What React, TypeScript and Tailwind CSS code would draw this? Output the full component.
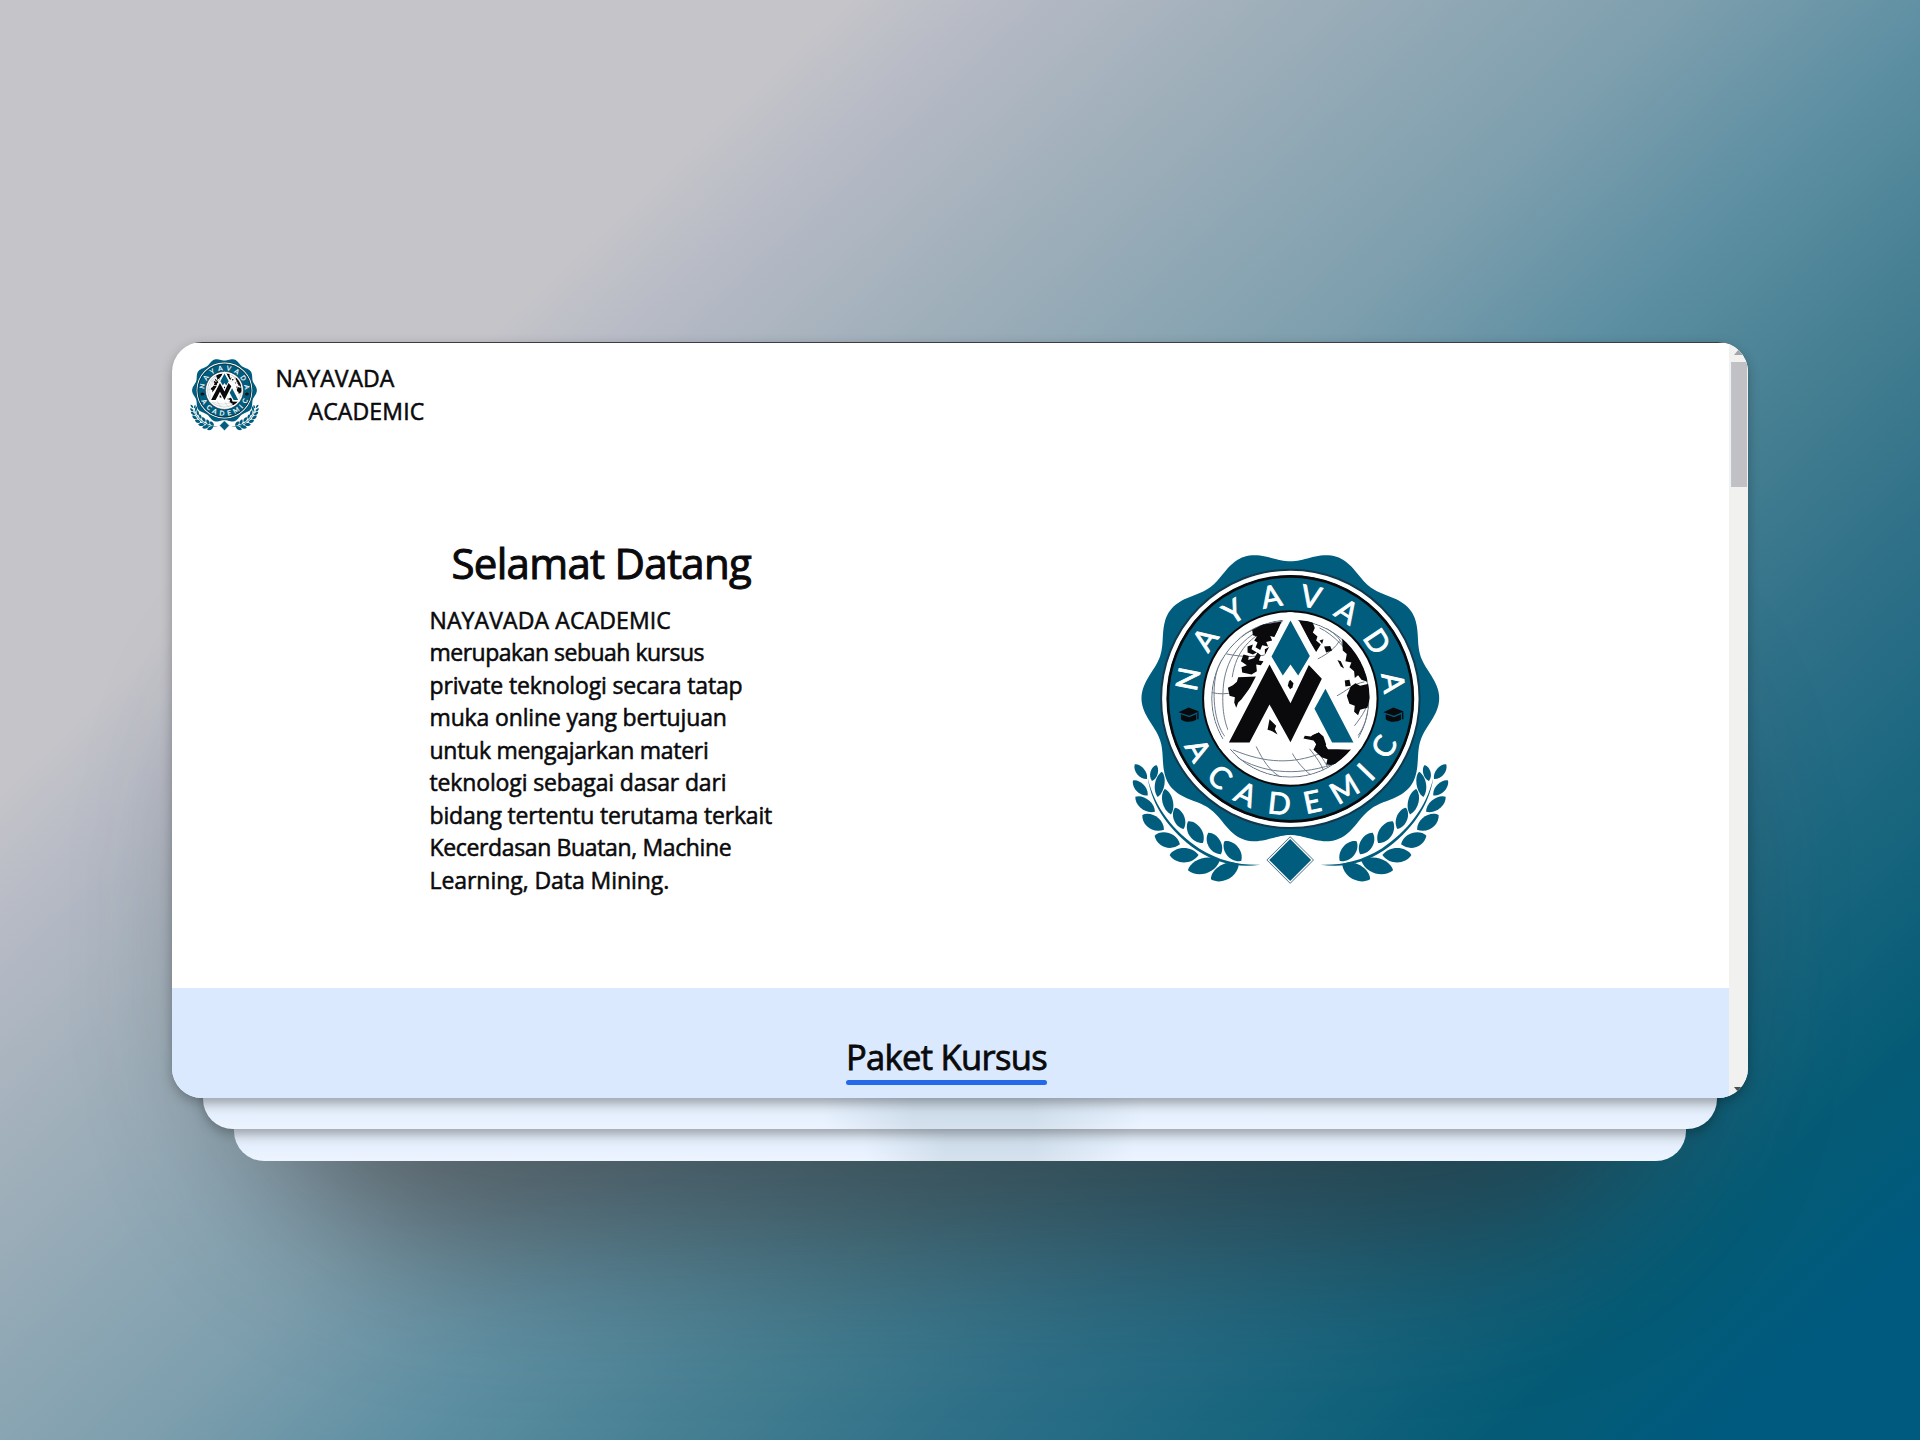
const TEAL = "#005d7e";
const INK = "#0a090b";

type Leaf = [number, number, number, number, number];

/* tip x, tip y, base x, base y, width */
const leaves: Leaf[] = [
  [45, 672, 82, 716, 25],
  [40, 720, 84, 765, 28],
  [47, 769, 106, 814, 33],
  [68, 824, 133, 868, 40],
  [105, 886, 181, 912, 43],
  [150, 944, 237, 944, 43],
  [205, 990, 300, 962, 46],
  [274, 1017, 358, 972, 46],
  [110, 674, 97, 722, 22],
  [127, 694, 114, 770, 28],
  [135, 746, 154, 822, 31],
  [166, 802, 192, 866, 32],
  [205, 843, 250, 908, 39],
  [266, 877, 304, 942, 38],
  [314, 903, 365, 962, 40],
];

function leafPath([tx, ty, bx, by, w]: Leaf) {
  const dx = bx - tx;
  const dy = by - ty;
  const len = Math.hypot(dx, dy);
  const nx = (-dy / len) * w * 0.66;
  const ny = (dx / len) * w * 0.66;
  const p = (t: number, s: number) =>
    `${(tx + dx * t + nx * s).toFixed(1)} ${(ty + dy * t + ny * s).toFixed(1)}`;
  return `M${tx} ${ty}C${p(0.2, 1)} ${p(0.75, 1.1)} ${bx} ${by}C${p(0.75, -1.1)} ${p(0.15, -0.9)} ${tx} ${ty}Z`;
}

function scallopPath() {
  const pts: string[] = [];
  for (let i = 0; i < 360; i += 1) {
    const a = (i * Math.PI) / 180;
    const r = 429 + 18 * Math.cos(10 * a);
    pts.push(`${(512.5 + r * Math.cos(a)).toFixed(1)} ${(473 + r * Math.sin(a)).toFixed(1)}`);
  }
  return `M${pts.join("L")}Z`;
}

const scallop = scallopPath();

/* letter, degrees clockwise from the top of the ring */
const upper: [string, number][] = [
  ["N", -79],
  ["A", -55],
  ["Y", -33],
  ["A", -10.5],
  ["V", 11.5],
  ["A", 33],
  ["D", 56.5],
  ["A", 81],
];

/* letter, degrees clockwise from the bottom of the ring */
const lower: [string, number][] = [
  ["A", 61],
  ["C", 42],
  ["A", 25],
  ["D", 6],
  ["E", -12],
  ["M", -31],
  ["I", -46],
  ["C", -63],
];

const shapes = {
  diamond: "M513 240L571 346L536 405L513 372L490 405L456 348Z",
  zigzag: "M328 606L450 372L513 488L568 373L607 415L513 605L450 492L390 606Z",
  leg: "M618 445L702 606H638L585 505Z",
};

function Laurel() {
  return (
    <g fill={TEAL}>
      {leaves.map((l) => (
        <path key={`${l[0]}-${l[1]}`} d={leafPath(l)} />
      ))}
      <path d="M84 712C105 800 160 872 240 925C300 962 360 975 423 973C360 983 295 972 232 930C150 872 98 800 84 712Z" />
    </g>
  );
}

function Cap({ x }: { x: number }) {
  return (
    <g transform={`translate(${x} 522)`} fill={INK}>
      <path d="M-30 -7L0 -21L31 -9L2 4Z" />
      <path d="M-23 -1L2 8L23 -1V16C10 24 -12 24 -23 14Z" />
      <path d="M26 -7H30V14H26Z" />
    </g>
  );
}

function Seal({ className, id }: { className: string; id: string }) {
  const ring = (list: [string, number][], y: number) =>
    list.map(([ch, deg]) => (
      <text
        key={deg}
        transform={`translate(512.5 475) rotate(${deg})`}
        y={y}
        textAnchor="middle"
        fontFamily="Lato, sans-serif"
        fontSize={90}
        fill="#fff"
        stroke="#fff"
        strokeWidth={2.6}
      >
        {ch}
      </text>
    ));
  return (
    <svg viewBox="38 40 950 994" className={className} aria-label="Nayavada Academic">
      <defs>
        <clipPath id={id}>
          <circle cx="512.5" cy="474" r="238" />
        </clipPath>
        <clipPath id={`${id}-disc`}>
          <circle cx="512.5" cy="474" r="259" />
        </clipPath>
      </defs>
      <path d={scallop} fill={TEAL} />
      <circle cx="512.5" cy="475" r="388" fill="none" stroke="#16364a" strokeWidth="6" />
      <circle cx="512.5" cy="475" r="378" fill="none" stroke="#fff" strokeWidth="14" />
      <circle cx="512.5" cy="475" r="368" fill="none" stroke={INK} strokeWidth="8" />
      <circle cx="512.5" cy="474" r="262" fill="#fff" stroke={INK} strokeWidth="6" />

      <g clipPath={`url(#${id})`}>
        <circle cx="512.5" cy="474" r="236" fill="none" stroke="#5b6b7c" strokeWidth="3" />
        <g fill="none" stroke="#6f7c8b" strokeWidth="3">
          <path d="M500 242C340 250 290 350 284 440C280 520 300 570 318 590" />
          <path d="M490 246C370 270 322 350 312 430C304 510 318 550 326 570" />
          <path d="M470 250C390 290 350 330 338 410" />
          <path d="M440 255C340 280 300 340 285 400" />
          <path d="M320 340C380 352 420 350 470 335" />
          <path d="M276 456C300 462 320 460 345 456" />
          <path d="M340 628C440 670 520 670 600 640" />
          <path d="M350 650C430 695 520 710 640 672" />
          <path d="M410 618C430 660 450 690 480 708" />
          <path d="M505 610C520 650 545 680 575 705" />
          <path d="M570 625C590 650 605 670 612 690" />
          <path d="M590 620C605 650 618 665 625 682" />
          <path d="M595 355C625 340 650 320 660 300" />
          <path d="M600 262C640 280 690 330 712 380" />
          <path d="M620 262C655 285 665 300 672 320" />
          <path d="M652 466C680 452 700 430 735 424" />
          <path d="M705 556C725 530 735 515 745 490" />
          <path d="M716 585C735 560 742 530 745 510" />
        </g>
        <g fill={INK}>
          <path d="M398 268L430 252L486 243L474 272L466 290L452 286L458 300L440 304L446 318L428 314L422 328L408 320L414 306L404 300L412 288L400 284Z" />
          <path d="M384 318L400 312L396 326L412 336L400 342L384 336Z" />
          <path d="M372 342L388 346L386 358L404 352L414 336L424 344L418 360L432 362L424 374L410 372L412 392L396 402L368 396L366 380L382 374L364 362Z" />
          <path d="M436 326L452 318L448 338L436 344Z" />
          <path d="M472 292L484 286L476 304L466 302Z" />
          <path d="M325 442L340 434L352 424L356 410L412 408L404 426L390 444L366 476L356 486L350 502L344 486L346 470L330 466Z" />
          <path d="M538 240L578 241L586 262L580 276L594 288L590 300L604 312L590 334L572 304Z" />
          <path d="M614 318L632 316L638 330L620 336Z" />
          <path d="M600 300L612 296L608 310Z" />
          <path d="M668 292L690 298L716 330L738 362L748 400L744 424L726 418L716 404L706 412L704 392L690 380L696 366L678 362L682 340L670 330Z" />
          <path d="M654 358L664 362L674 384L664 378Z" />
          <path d="M676 420L690 418L694 436L678 438Z" />
          <path d="M694 438L708 428L722 436L748 430L752 470L744 502L722 508L716 524L704 514L706 496L690 490L682 466Z" />
          <path d="M579 584L598 576L614 590L612 602L624 624L700 628L680 652L650 670L634 674L620 672L624 656L606 650L582 628L590 612Z" />
        </g>
      </g>

      <g clipPath={`url(#${id}-disc)`} fill="#fff" stroke="#fff" strokeWidth="40" strokeMiterlimit="3">
        <path d={shapes.diamond} />
        <path d={shapes.zigzag} />
        <path d={shapes.leg} />
      </g>
      <path d="M513 400L556 440L513 500L470 440Z" fill="#fff" />
      <path d="M450 536L470 556L466 566L474 582L458 572L444 568Z" fill={INK} />
      <path d="M512 418L522 428L519 440L512 446L505 436L508 424Z" fill={INK} />
      <path d="M579 584L598 576L612 588L620 612L612 625L588 625L590 610L582 600L552 594L556 586L574 588Z" fill={INK} />
      <path d={shapes.diamond} fill={TEAL} />
      <path d={shapes.zigzag} fill={INK} />
      <path d={shapes.leg} fill={TEAL} />

      {ring(upper, -281)}
      {ring(lower, 348)}
      <Cap x={207} />
      <Cap x={822} />

      <path d="M512 886L585 959L512 1032L439 959Z" fill="#fff" stroke="#fff" strokeWidth="4" />
      <path d="M512 889L582 959L512 1029L442 959Z" fill="#fff" stroke="#4b7186" strokeWidth="3" />
      <path d="M512 896L575 959L512 1022L449 959Z" fill={TEAL} />
      <Laurel />
      <g transform="matrix(-1 0 0 1 1026 0)">
        <Laurel />
      </g>
    </svg>
  );
}

function ScrollBar() {
  return (
    <div className="flex w-[19px] shrink-0 flex-col items-center justify-between bg-[#f1f1f0]">
      <div className="flex w-full flex-col items-center">
        <div className="flex h-[20px] items-end pb-[7px]">
          <svg viewBox="0 0 10 6" className="h-[6px] w-[10px]">
            <path d="M5 0L10 6H0Z" fill="#a3a5a8" />
          </svg>
        </div>
        <div className="h-[125px] w-4 border-l border-[#b9c6d3] bg-[#c1c1c5]" />
      </div>
      <svg viewBox="0 0 10 6" className="mb-[5px] h-[6px] w-[10px]">
        <path d="M0 0H10L5 6Z" fill="#4a4c50" />
      </svg>
    </div>
  );
}

export default function App() {
  return (
    <div className="relative isolate flex h-[1440px] w-[1920px] flex-col items-center overflow-hidden bg-[linear-gradient(137deg,#c5c5c9_0%,#c4c4c9_24.5%,#b6bac5_29%,#a1b0bb_36%,#7e9fae_48.5%,#5f90a3_56%,#467f92_64%,#2e7088_72%,#1a667f_79.5%,#055b75_87.5%,#005a7f_94%,#005a80_100%)] pt-[342px] font-['Open_Sans','Noto_Sans',sans-serif] text-[#0a0a0c] [-webkit-text-stroke:0.55px]">
      <div className="absolute left-[240px] top-[620px] -z-10 h-[630px] w-[1440px] rounded-[240px] bg-[rgba(42,30,28,0.5)] blur-[75px]" />
      <main className="relative z-30 flex h-[756px] w-[1576px] shrink-0 overflow-hidden rounded-[30px] bg-white shadow-[0_4px_12px_rgba(0,0,0,0.28)]">
        <div className="flex min-w-0 flex-1 flex-col">
          <div className="h-px shrink-0 bg-[#3c3c45]" />
          <header className="flex h-[104px] shrink-0 items-start pl-[18px] pt-4">
            <Seal id="globe-small" className="h-[72px] w-[69px]" />
            <div className="ml-[16.5px] mt-[3px] flex flex-col whitespace-nowrap text-[23px] leading-[32.5px]">
              <span>NAYAVADA</span>
              <span className="ml-[33px] tracking-[0.15px]">ACADEMIC</span>
            </div>
          </header>
          <section className="flex flex-1 items-start">
            <div className="flex w-[778px] flex-col pl-[257.5px] pt-[91px]">
              <h1 className="ml-[22px] h-[58px] whitespace-nowrap text-[42px] leading-[50px] tracking-[-0.7px] [-webkit-text-stroke:1px]">
                Selamat Datang
              </h1>
              <p className="mt-[7.5px] flex flex-col whitespace-nowrap text-[23px] leading-[32.5px]">
                <span className="tracking-[0.12px]">NAYAVADA ACADEMIC</span>
                <span className="tracking-[-0.5px]">merupakan sebuah kursus</span>
                <span className="tracking-[-0.15px]">private teknologi secara tatap</span>
                <span className="tracking-[-0.15px]">muka online yang bertujuan</span>
                <span className="tracking-[-0.27px]">untuk mengajarkan materi</span>
                <span className="tracking-[-0.14px]">teknologi sebagai dasar dari</span>
                <span className="tracking-[-0.18px]">bidang tertentu terutama terkait</span>
                <span className="tracking-[-0.36px]">Kecerdasan Buatan, Machine</span>
                <span className="tracking-[-0.06px]">Learning, Data Mining.</span>
              </p>
            </div>
            <Seal id="globe-large" className="ml-[182px] mt-[106.5px] h-[331px] w-[317px]" />
          </section>
          <section className="flex h-[110px] shrink-0 flex-col items-center bg-[#dbe9fe] pr-[8px] pt-[45px]">
            <h2 className="flex flex-col whitespace-nowrap text-[34.5px] leading-[47px] tracking-[-0.68px] [-webkit-text-stroke:0.8px]">
              Paket Kursus
              <span className="h-[5px] w-[201px] rounded-full bg-[#2469e8]" />
            </h2>
          </section>
        </div>
        <ScrollBar />
      </main>
      <div className="relative z-20 -mt-[60px] h-[91px] w-[1514px] shrink-0 rounded-[30px] bg-[#e8f1fe] bg-[linear-gradient(90deg,transparent_620px,rgba(120,150,165,0.2)_710px,rgba(120,150,165,0.2)_830px,transparent_940px),linear-gradient(180deg,#d3dce8_63px,#dbe5f1_68px,#e2ecf9_73px,#e6f0fe_79px,#edf4ff_91px)] shadow-[0_4px_12px_rgba(0,0,0,0.28)]" />
      <div className="relative z-10 -mt-[60px] h-[92px] w-[1452px] shrink-0 rounded-[30px] bg-[#e8f1fe] bg-[linear-gradient(90deg,transparent_630px,rgba(120,150,165,0.2)_710px,rgba(120,150,165,0.2)_800px,transparent_900px),linear-gradient(180deg,#d3dce8_63px,#dbe5f1_68px,#e2ecf9_73px,#e6f0fe_79px,#edf4ff_91px)]" />
    </div>
  );
}
